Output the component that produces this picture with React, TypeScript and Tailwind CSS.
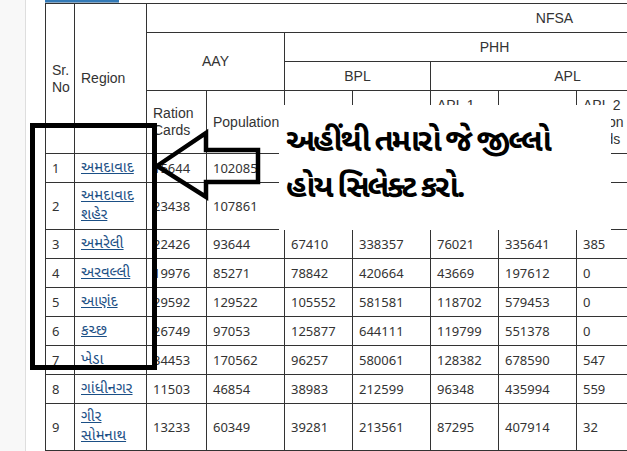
const COLS = [29, 72, 60, 78, 68, 78, 68, 78, 60, 68, 129, 129];

type Row = {
  sr: number;
  region: string[];
  vals: string[];
  h?: number;
};

const ROWS: Row[] = [
  { sr: 1, region: ["અમદાવાદ"], vals: ["15644", "102085", "58733", "288154", "91245", "402311", "120", "540", "9"] },
  { sr: 2, region: ["અમદાવાદ", "શહેર"], vals: ["23438", "107861", "61250", "270118", "236512", "958001", "210", "830", "0"], h: 47 },
  { sr: 3, region: ["અમરેલી"], vals: ["22426", "93644", "67410", "338357", "76021", "335641", "385", "1610", "0"] },
  { sr: 4, region: ["અરવલ્લી"], vals: ["19976", "85271", "78842", "420664", "43669", "197612", "0", "0", "0"] },
  { sr: 5, region: ["આણંદ"], vals: ["29592", "129522", "105552", "581581", "118702", "579453", "0", "0", "0"] },
  { sr: 6, region: ["કચ્છ"], vals: ["26749", "97053", "125877", "644111", "119799", "551378", "0", "0", "0"] },
  { sr: 7, region: ["ખેડા"], vals: ["34453", "170562", "96257", "580061", "128382", "678590", "547", "2310", "0"] },
  { sr: 8, region: ["ગાંધીનગર"], vals: ["11503", "46854", "38983", "212599", "96348", "435994", "559", "2402", "0"] },
  { sr: 9, region: ["ગીર", "સોમનાથ"], vals: ["13233", "60349", "39281", "213561", "87295", "407914", "32", "140", "0"], h: 47 },
];

const th = "border border-[#333] px-[6px] font-normal text-[#333]";
const td = "border border-[#333] px-[6px] align-middle";

export default function App() {
  return (
    <div className="relative flex h-[451px] w-[627px] overflow-hidden bg-white font-['Liberation_Sans',Arial,sans-serif] text-[14px] leading-[17px] text-[#333]">
      {/* left gutter */}
      <div className="w-[26px] shrink-0 border-r border-[#dedede] bg-[#f8f8f8]" />

      <div className="shrink-0 pl-[19px]">
        <div className="h-[3px] w-[74px] border-b border-[#8aa9c4] bg-[#337ab7]" />
        <table
          className="table-fixed border-collapse"
          style={{ width: COLS.reduce((a, b) => a + b, 0) }}
        >
          <colgroup>
            {COLS.map((w, i) => (
              <col key={i} style={{ width: w }} />
            ))}
          </colgroup>
          <thead>
            <tr className="h-[29px]">
              <th rowSpan={4} className={`${th} text-left`}>
                Sr.
                <br />
                No
              </th>
              <th rowSpan={4} className={`${th} text-left`}>
                Region
              </th>
              <th colSpan={10} className={`${th} text-center`}>
                NFSA
              </th>
            </tr>
            <tr className="h-[29px]">
              <th colSpan={2} rowSpan={2} className={`${th} text-center`}>
                AAY
              </th>
              <th colSpan={6} className={`${th} text-center`}>
                PHH
              </th>
              <th colSpan={2} rowSpan={2} className={`${th} text-center`}>
                Total
              </th>
            </tr>
            <tr className="h-[29px]">
              <th colSpan={2} className={`${th} text-center`}>
                BPL
              </th>
              <th colSpan={4} className={`${th} text-center`}>
                APL
              </th>
            </tr>
            <tr className="h-[63px]">
              <th className={`${th} text-left`}>Ration Cards</th>
              <th className={`${th} text-left`}>Population</th>
              <th className={`${th} text-left`}>Ration Cards</th>
              <th className={`${th} text-left`}>Population</th>
              <th className={`${th} text-left`}>APL 1 Ration Cards</th>
              <th className={`${th} text-left`}>APL 1 Population</th>
              <th className={`${th} text-left`}>APL 2 Ration Cards</th>
              <th className={`${th} text-left`}>APL 2 Population</th>
              <th className={`${th} text-left`}>Ration Cards</th>
              <th className={`${th} text-left`}>Population</th>
            </tr>
          </thead>
          <tbody className="font-['Noto_Sans','Noto_Sans_Gujarati',sans-serif] text-[13px] leading-[18px]">
            {ROWS.map((r) => (
              <tr key={r.sr} style={{ height: r.h ?? 29 }}>
                <td className={td}>{r.sr}</td>
                <td className={`${td} pt-0 pb-[4px]`}>
                  <a href="#" className="text-[15px] leading-[19px] text-[#1b4f85] underline">
                    {r.region.map((p, i) => (
                      <span key={i}>
                        {i > 0 && <br />}
                        {p}
                      </span>
                    ))}
                  </a>
                </td>
                {r.vals.map((v, i) => (
                  <td key={i} className={td}>
                    {v}
                  </td>
                ))}
                <td className={td}>0</td>
              </tr>
            ))}
          </tbody>
        </table>
      </div>

      {/* callout text box */}
      <div className="absolute left-[279px] top-[105px] h-[125px] w-[332px] bg-white pl-[7px] pt-[11px] font-['Noto_Sans','Noto_Sans_Gujarati',sans-serif] text-[31px] font-bold leading-[46px] tracking-[-2.2px] text-black">
        <div>અહીંથી તમારો જે જીલ્લો</div>
        <div>હોય સિલેક્ટ કરો.</div>
      </div>

      {/* arrow */}
      <svg
        className="pointer-events-none absolute left-0 top-0"
        width={627}
        height={451}
        viewBox="0 0 627 451"
      >
        <polygon
          points="157,166 206,133 206,150 258,150 258,182 206,182 206,197"
          fill="none"
          stroke="#000"
          strokeWidth={4.5}
          strokeLinejoin="miter"
        />
      </svg>

      {/* highlight box */}
      <div className="absolute left-[30px] top-[123px] h-[247px] w-[127px] border-[5px] border-black" />
    </div>
  );
}
